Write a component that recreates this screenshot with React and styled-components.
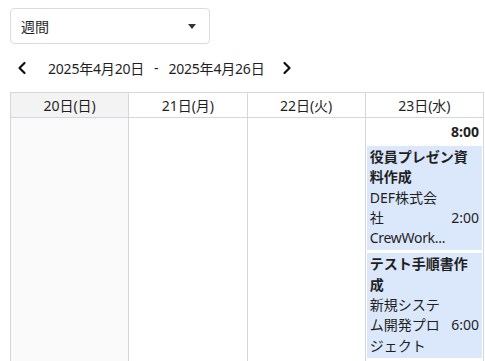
import React, { useState } from 'react'
import styled, { createGlobalStyle } from 'styled-components'

const GlobalStyle = createGlobalStyle`
  body {
    margin: 0;
    background: #fff;
    font-family: "Noto Sans", "Noto Sans CJK JP", sans-serif;
    color: #1f1f1f;
  }
`

const Page = styled.div`
  padding: 8px 0 0 10px;
  height: 353px;
  overflow: hidden;
`

const Select = styled.div`
  width: 200px;
  height: 36px;
  box-sizing: border-box;
  border: 1px solid #dcdce0;
  border-radius: 4px;
  display: flex;
  align-items: center;
  justify-content: space-between;
  padding: 0 13px 0 10px;
  font-size: 14px;
`

const Caret = styled.span`
  width: 0;
  height: 0;
  border-left: 4px solid transparent;
  border-right: 4px solid transparent;
  border-top: 5px solid #333;
`

const Nav = styled.div`
  display: flex;
  align-items: center;
  height: 24px;
  margin: 12px 0 12px;
  font-size: 14px;
`

const Arrow = styled.button`
  border: none;
  background: none;
  padding: 0;
  width: 24px;
  height: 24px;
  display: flex;
  align-items: center;
  justify-content: center;
  margin: ${p => (p.$right ? '0 0 0 11px' : '0 14px 0 0')};
  cursor: pointer;
`

const Range = styled.span`
  display: flex;
  gap: 10px;
  letter-spacing: -0.2px;
`

const Table = styled.div`
  width: 473px;
  display: grid;
  grid-template-columns: repeat(4, 1fr);
  border-left: 1px solid #d6d6de;
  border-top: 1px solid #d6d6de;
`

const Head = styled.div`
  height: 25px;
  box-sizing: border-box;
  display: flex;
  align-items: center;
  justify-content: center;
  font-size: 14px;
  border-right: 1px solid #d6d6de;
  border-bottom: 1px solid #d6d6de;
  background: ${p => (p.$holiday ? '#f3f3f3' : '#fff')};
`

const Cell = styled.div`
  height: 260px;
  border-right: 1px solid #d6d6de;
  background: ${p => (p.$holiday ? '#fafafa' : '#fff')};
  display: flex;
  flex-direction: column;
  gap: 2px;
  padding: 0 1px;
`

const Hour = styled.div`
  text-align: right;
  font-weight: 700;
  font-size: 14px;
  line-height: 20px;
  padding: 4px 3px 2px;
`

const Event = styled.div`
  background: #dbe7fb;
  padding: 1px 3px 2px;
  font-size: 14px;
  line-height: 20.3px;
  margin-bottom: 1px;
`

const Title = styled.div`
  font-weight: 700;
`

const Meta = styled.div`
  display: grid;
  grid-template-columns: minmax(0, 1fr) auto;
  column-gap: 8px;
`

const Client = styled.div`
  grid-column: 1;
`

const Project = styled.div`
  grid-column: 1;
  white-space: nowrap;
  letter-spacing: -0.3px;
`

const Time = styled.div`
  grid-column: 2;
  grid-row: 1 / span 2;
  align-self: center;
`

const Chevron = ({ right }) => (
  <svg width="10" height="14" viewBox="0 0 10 14">
    <path
      d={right ? 'M2.5 2 L7.5 7 L2.5 12' : 'M7.5 2 L2.5 7 L7.5 12'}
      fill="none"
      stroke="#111"
      strokeWidth="2.2"
      strokeLinecap="round"
      strokeLinejoin="round"
    />
  </svg>
)

const days = ['20日(日)', '21日(月)', '22日(火)', '23日(水)']

const events = [
  { title: '役員プレゼン資料作成', client: 'DEF株式会社', project: 'CrewWork...', time: '2:00' },
  { title: 'テスト手順書作成', client: '新規システム開発プロジェクト', project: '', time: '6:00' },
]

export default function App() {
  const [week] = useState('週間')

  return (
    <Page>
      <GlobalStyle />
      <Select>
        <span>{week}</span>
        <Caret />
      </Select>
      <Nav>
        <Arrow aria-label="前へ"><Chevron /></Arrow>
        <Range>
          <span>2025年4月20日</span>
          <span>-</span>
          <span>2025年4月26日</span>
        </Range>
        <Arrow $right aria-label="次へ"><Chevron right /></Arrow>
      </Nav>
      <Table>
        {days.map((d, i) => (
          <Head key={d} $holiday={i === 0}>{d}</Head>
        ))}
        {days.map((d, i) => (
          <Cell key={d} $holiday={i === 0}>
            {i === 3 && (
              <>
                <Hour>8:00</Hour>
                {events.map(ev => (
                  <Event key={ev.title}>
                    <Title>{ev.title}</Title>
                    <Meta>
                      <Client>{ev.client}</Client>
                      {ev.project && <Project>{ev.project}</Project>}
                      <Time>{ev.time}</Time>
                    </Meta>
                  </Event>
                ))}
              </>
            )}
          </Cell>
        ))}
      </Table>
    </Page>
  )
}
